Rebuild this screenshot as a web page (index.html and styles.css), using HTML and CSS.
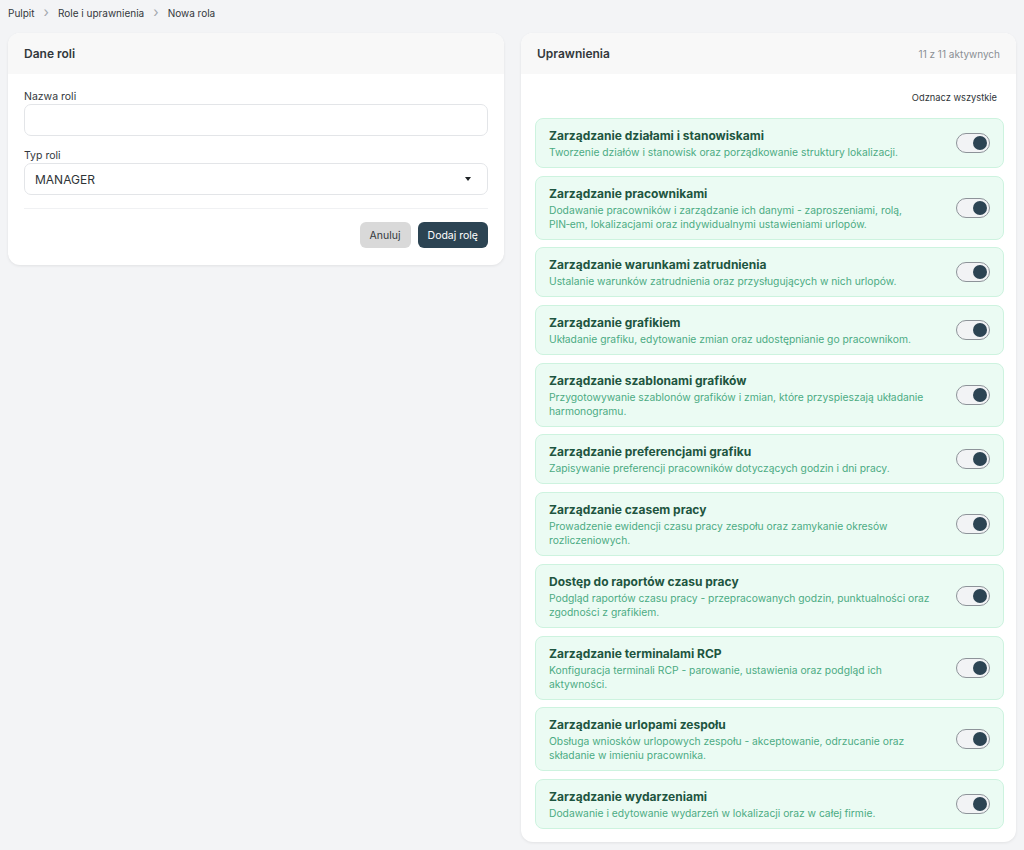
FILE: index.html
```html
<!DOCTYPE html>
<html lang="pl">
<head>
    <meta charset="UTF-8">
    <meta name="viewport" content="width=device-width, initial-scale=1.0">
    <title>Nowa rola</title>
    <link rel="stylesheet" href="styles.css">
</head>
<body>
    <nav class="breadcrumb">
        <a href="#">Pulpit</a>
        <span class="sep">&#8250;</span>
        <a href="#">Role i uprawnienia</a>
        <span class="sep">&#8250;</span>
        <span class="current">Nowa rola</span>
    </nav>

    <div class="layout">
        <!-- Dane roli -->
        <section class="card role-card">
            <div class="card-header">
                <h2>Dane roli</h2>
            </div>
            <form class="card-body">
                <div class="field">
                    <label for="roleName">Nazwa roli</label>
                    <input type="text" id="roleName" name="roleName">
                </div>
                <div class="field">
                    <label for="roleType">Typ roli</label>
                    <div class="select">
                        <span>MANAGER</span>
                        <span class="caret"></span>
                    </div>
                </div>
                <div class="actions">
                    <button type="button" class="btn btn-light">Anuluj</button>
                    <button type="submit" class="btn btn-dark">Dodaj rolę</button>
                </div>
            </form>
        </section>

        <!-- Uprawnienia -->
        <section class="card">
            <div class="card-header">
                <h2>Uprawnienia</h2>
                <span class="counter">11 z 11 aktywnych</span>
            </div>
            <div class="card-body perms-body">
                <div class="perms-toolbar">
                    <button type="button" class="link-btn">Odznacz wszystkie</button>
                </div>
                <ul class="perms">
                    <li class="perm">
                        <div class="perm-text">
                            <h3>Zarządzanie działami i stanowiskami</h3>
                            <p>Tworzenie działów i stanowisk oraz porządkowanie struktury lokalizacji.</p>
                        </div>
                        <span class="switch on"><span class="knob"></span></span>
                    </li>
                    <li class="perm">
                        <div class="perm-text">
                            <h3>Zarządzanie pracownikami</h3>
                            <p>Dodawanie pracowników i zarządzanie ich danymi - zaproszeniami, rolą, PIN&#8209;em, lokalizacjami oraz indywidualnymi ustawieniami urlopów.</p>
                        </div>
                        <span class="switch on"><span class="knob"></span></span>
                    </li>
                    <li class="perm">
                        <div class="perm-text">
                            <h3>Zarządzanie warunkami zatrudnienia</h3>
                            <p>Ustalanie warunków zatrudnienia oraz przysługujących w nich urlopów.</p>
                        </div>
                        <span class="switch on"><span class="knob"></span></span>
                    </li>
                    <li class="perm">
                        <div class="perm-text">
                            <h3>Zarządzanie grafikiem</h3>
                            <p>Układanie grafiku, edytowanie zmian oraz udostępnianie go pracownikom.</p>
                        </div>
                        <span class="switch on"><span class="knob"></span></span>
                    </li>
                    <li class="perm">
                        <div class="perm-text">
                            <h3>Zarządzanie szablonami grafików</h3>
                            <p>Przygotowywanie szablonów grafików i zmian, które przyspieszają układanie harmonogramu.</p>
                        </div>
                        <span class="switch on"><span class="knob"></span></span>
                    </li>
                    <li class="perm">
                        <div class="perm-text">
                            <h3>Zarządzanie preferencjami grafiku</h3>
                            <p>Zapisywanie preferencji pracowników dotyczących godzin i dni pracy.</p>
                        </div>
                        <span class="switch on"><span class="knob"></span></span>
                    </li>
                    <li class="perm">
                        <div class="perm-text">
                            <h3>Zarządzanie czasem pracy</h3>
                            <p>Prowadzenie ewidencji czasu pracy zespołu oraz zamykanie okresów rozliczeniowych.</p>
                        </div>
                        <span class="switch on"><span class="knob"></span></span>
                    </li>
                    <li class="perm">
                        <div class="perm-text">
                            <h3>Dostęp do raportów czasu pracy</h3>
                            <p>Podgląd raportów czasu pracy - przepracowanych godzin, punktualności oraz zgodności z grafikiem.</p>
                        </div>
                        <span class="switch on"><span class="knob"></span></span>
                    </li>
                    <li class="perm">
                        <div class="perm-text">
                            <h3>Zarządzanie terminalami RCP</h3>
                            <p>Konfiguracja terminali RCP - parowanie, ustawienia oraz podgląd ich aktywności.</p>
                        </div>
                        <span class="switch on"><span class="knob"></span></span>
                    </li>
                    <li class="perm">
                        <div class="perm-text">
                            <h3>Zarządzanie urlopami zespołu</h3>
                            <p>Obsługa wniosków urlopowych zespołu - akceptowanie, odrzucanie oraz składanie w imieniu pracownika.</p>
                        </div>
                        <span class="switch on"><span class="knob"></span></span>
                    </li>
                    <li class="perm">
                        <div class="perm-text">
                            <h3>Zarządzanie wydarzeniami</h3>
                            <p>Dodawanie i edytowanie wydarzeń w lokalizacji oraz w całej firmie.</p>
                        </div>
                        <span class="switch on"><span class="knob"></span></span>
                    </li>
                </ul>
            </div>
        </section>
    </div>
</body>
</html>
```

FILE: styles.css
```css
* {
    box-sizing: border-box;
}

body {
    margin: 0;
    padding: 0 8px 8px;
    font-family: Inter, "Open Sans", sans-serif;
    background-color: #f3f4f6;
    color: #2f3437;
}

/* Breadcrumb */
.breadcrumb {
    display: flex;
    align-items: center;
    gap: 9px;
    height: 25px;
    margin-bottom: 8px;
    font-size: 10px;
}

.breadcrumb a,
.breadcrumb .current {
    color: #33383c;
    text-decoration: none;
}

.breadcrumb .sep {
    color: #a3a8ae;
    font-size: 14px;
    line-height: 1;
    margin-top: -2px;
}

/* Two-column layout */
.layout {
    display: grid;
    grid-template-columns: 496px 1fr;
    gap: 17px;
    align-items: start;
}

.card {
    background-color: #ffffff;
    border-radius: 12px;
    box-shadow: 0 1px 3px rgba(0, 0, 0, 0.08);
    overflow: hidden;
}

.card-header {
    display: flex;
    align-items: center;
    justify-content: space-between;
    height: 41px;
    padding: 0 16px;
    background-color: #f8f8f8;
}

.card-header h2 {
    margin: 0;
    font-size: 12px;
    font-weight: 600;
    color: #33383c;
}

.counter {
    font-size: 10px;
    color: #8a8f94;
}

.card-body {
    padding: 16px 16px 17px;
}

/* Form */
.field {
    margin-bottom: 13px;
}

.field label {
    display: block;
    font-size: 10.5px;
    line-height: 14px;
    color: #33383c;
}

.field input,
.select {
    width: 100%;
    height: 32px;
    border: 1px solid #e3e5e8;
    border-radius: 7px;
    background-color: #ffffff;
    font-family: inherit;
    font-size: 12px;
    padding: 0 10px;
}

.select {
    display: flex;
    align-items: center;
    justify-content: space-between;
    color: #2f3437;
    padding-right: 16px;
}

.caret {
    width: 0;
    height: 0;
    border-left: 3px solid transparent;
    border-right: 3px solid transparent;
    border-top: 4px solid #1f2326;
}

.actions {
    display: flex;
    justify-content: flex-end;
    gap: 7px;
    border-top: 1px solid #f0f1f3;
    margin-top: 13px;
    padding-top: 13px;
}

.btn {
    height: 26px;
    padding: 0 10px;
    border: none;
    border-radius: 6px;
    font-family: inherit;
    font-size: 10.5px;
    cursor: pointer;
}

.btn-light {
    background-color: #d9d9d9;
    color: #33383c;
}

.btn-dark {
    background-color: #2c4453;
    color: #ffffff;
}

/* Permissions */
.perms-body {
    padding: 17px 12px 13px 14px;
}

.perms-toolbar {
    display: flex;
    justify-content: flex-end;
    margin-bottom: 13px;
}

.link-btn {
    background: none;
    border: none;
    padding: 0 7px 0 0;
    font-family: inherit;
    font-size: 9.3px;
    line-height: 14px;
    color: #2f3437;
    cursor: pointer;
}

.perms {
    list-style: none;
    margin: 0;
    padding: 0;
    display: flex;
    flex-direction: column;
    gap: 7.7px;
}

.perm {
    display: flex;
    align-items: center;
    gap: 13px;
    padding: 8px 13px;
    background-color: #ebfbf3;
    border: 1px solid #cdf3df;
    border-radius: 8px;
}

.perm-text {
    flex: 1;
}

.perm h3 {
    margin: 0;
    font-size: 12px;
    line-height: 18px;
    font-weight: 700;
    color: #1e5540;
}

.perm p {
    margin: 0;
    font-size: 10.3px;
    line-height: 14px;
    color: #4cab83;
}

.switch {
    flex: none;
    display: flex;
    align-items: center;
    width: 34px;
    height: 20px;
    padding: 0 2px;
    border: 1.5px solid #8d9399;
    border-radius: 10px;
    background-color: #f2f3f5;
}

.switch.on {
    justify-content: flex-end;
}

.knob {
    width: 14px;
    height: 14px;
    border-radius: 50%;
    background-color: #2c4453;
}
```
